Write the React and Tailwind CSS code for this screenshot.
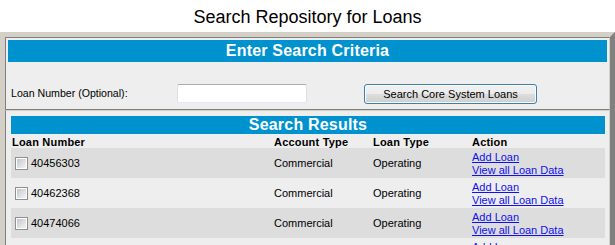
import React from "react";

const FONT = { fontFamily: '"Liberation Sans", Arial, sans-serif' };

function Checkbox() {
  return (
    <span className="inline-block w-[13px] h-[13px] border border-[#8f8f8f] bg-white p-[1px] shrink-0">
      <span className="block w-full h-full bg-[linear-gradient(135deg,#c4c6ca,#f4f4f4)]" />
    </span>
  );
}

const rows = [
  { num: "40456303", acct: "Commercial", type: "Operating" },
  { num: "40462368", acct: "Commercial", type: "Operating" },
  { num: "40474066", acct: "Commercial", type: "Operating" },
  { num: "40481152", acct: "Commercial", type: "Operating" },
];

export default function App() {
  return (
    <div className="w-[615px] h-[245px] overflow-hidden bg-white text-black" style={FONT}>
      <div className="h-[32px] pt-[7px] text-center text-[18px] leading-[20px]">
        Search Repository for Loans
      </div>
      <div className="border-[5px] border-l-[#d4d0c8] border-t-[#d4d0c8] border-r-[#808080] border-b-[#808080]">
        {/* Search criteria */}
        <div className="bg-[#eeeeee] border border-[#808080] border-r-[#d4d0c8] px-[2px] pt-[2px] pb-[5px]">
          <div className="h-[22px] bg-[#0092cf] text-white font-bold text-[16px] tracking-[0.2px] flex items-center justify-center">
            Enter Search Criteria
          </div>
          <div className="mt-[22px] h-[20px] flex items-start">
            <div className="w-[169px] pl-[3px] h-[20px] flex items-center text-[10.6px]">
              Loan Number (Optional):
            </div>
            <input
              type="text"
              className="w-[130px] h-[19px] bg-white border border-[#dbdfe6] border-t-[#abadb3] border-b-[#e3e9ef] rounded-[2px] outline-none"
            />
            <button
              type="button"
              className="ml-[57px] w-[173px] h-[20px] border border-[#3c7fb1] rounded-[3px] shadow-[inset_0_0_0_1px_#fbfbfb] bg-[linear-gradient(to_bottom,#f2f2f2_0%,#ebebeb_50%,#dddddd_50%,#cfcfcf_100%)] text-[11px] leading-[18px] text-black"
              style={FONT}
            >
              Search Core System Loans
            </button>
          </div>
        </div>
        {/* Search results */}
        <div className="bg-[#eeeeee] border-l border-l-[#808080] border-t border-t-[#d4d0c8] border-r border-r-[#d4d0c8] pl-[5px] pr-[4px] pt-[5px] pb-[10px]">
          <div className="h-[18px] bg-[#0092cf] text-white font-bold text-[16px] tracking-[0.2px] flex items-center justify-center">
            Search Results
          </div>
          <div className="grid grid-cols-[262px_99px_99px_1fr] h-[14px] pt-[2px] text-[11px] leading-[12px] font-bold tracking-[0.2px]">
            <div className="pl-[1px]">Loan Number</div>
            <div className="pl-[1px]">Account Type</div>
            <div className="pl-[1px]">Loan Type</div>
            <div className="pl-[1px]">Action</div>
          </div>
          {rows.map((r, i) => (
            <div
              key={r.num}
              className={
                "grid grid-cols-[262px_99px_99px_1fr] h-[30px] items-center text-[11px] " +
                (i % 2 === 0 ? "bg-[#dddddd]" : "bg-[#eeeeee]")
              }
            >
              <div className="pl-[4px] flex items-center gap-[3px]">
                <Checkbox />
                <span>{r.num}</span>
              </div>
              <div className="pl-[1px]">{r.acct}</div>
              <div className="pl-[1px]">{r.type}</div>
              <div className="pl-[1px] flex flex-col items-start leading-[13px] pt-[1px]">
                <a href="#" className="text-[#1010f0] underline">Add Loan</a>
                <a href="#" className="text-[#1010f0] underline">View all Loan Data</a>
              </div>
            </div>
          ))}
        </div>
      </div>
    </div>
  );
}
